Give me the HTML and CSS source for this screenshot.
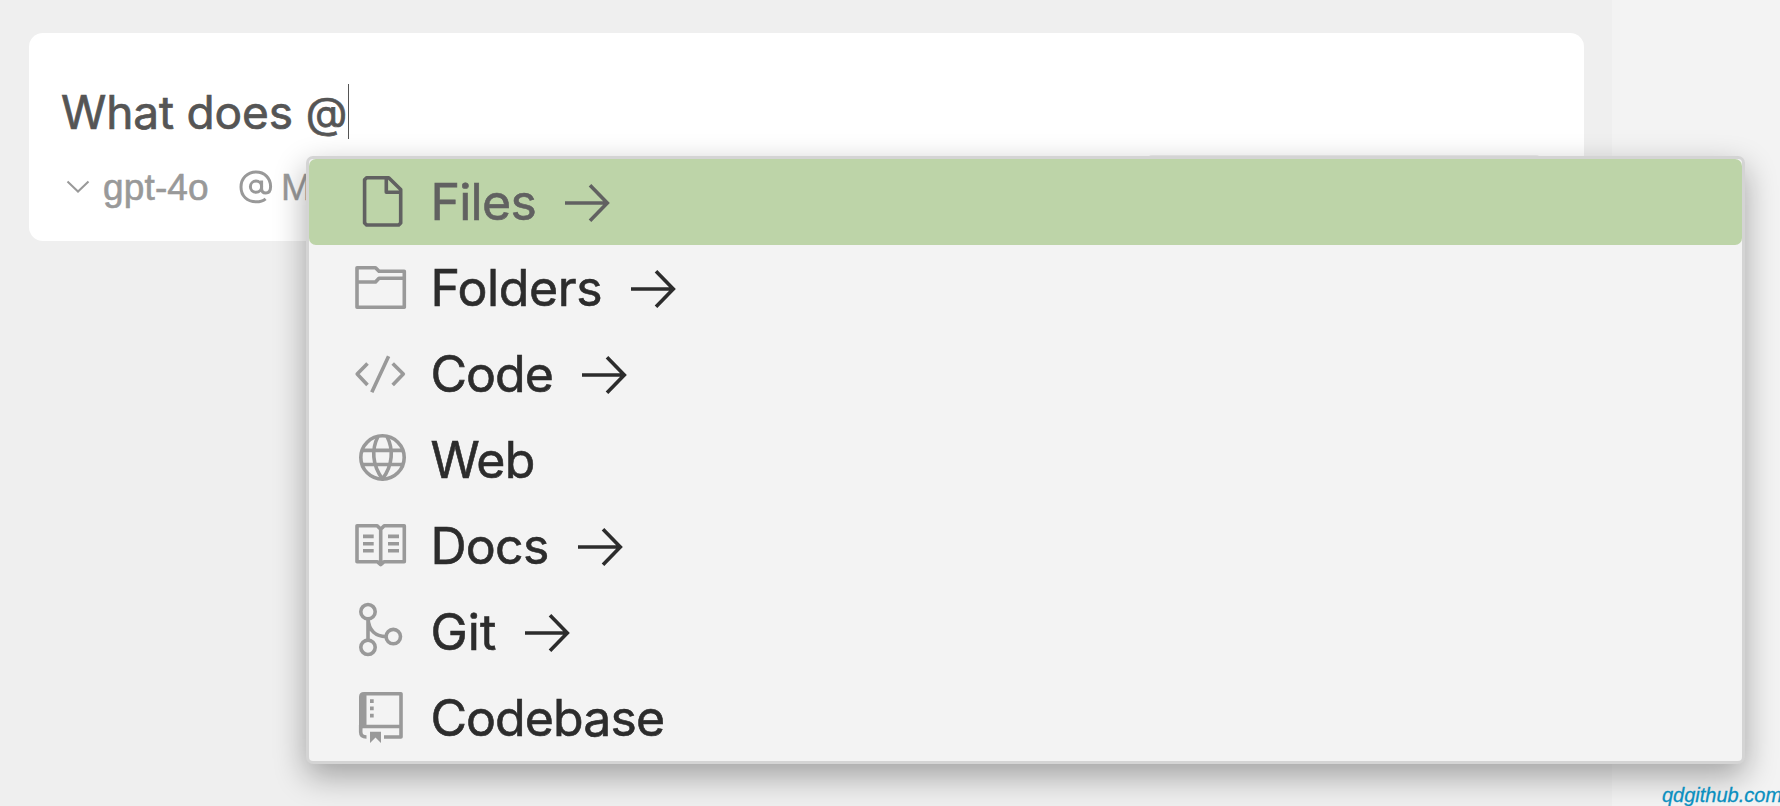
FILE: index.html
```html
<!DOCTYPE html>
<html lang="en">
<head>
<meta charset="utf-8">
<title>Chat context menu</title>
<link rel="stylesheet" href="styles.css">
</head>
<body>
<div class="app">
  <main class="chat">
    <section class="composer">
      <div class="prompt"><span class="prompt-text">What does <span class="prompt-at">@</span></span><span class="caret"></span></div>
      <div class="toolbar">
        <svg class="chevron" viewBox="0 0 24 14"><path d="M1.5 1.5 12 11.5 22.5 1.5"/></svg>
        <span class="model">gpt-4o</span>
        <svg class="at" viewBox="0 0 34 34"><circle cx="17" cy="16.7" r="5.6"/><path d="M22.6 10.5V18.5C22.6 21.5 24.2 23 26.7 23C29.800 23 31.600 20.500 31.600 16.500C31.600 8 25.500 2 17 2C8.400 2 2 8.300 2 17C2 26 8.200 31.800 17 31.800C20.700 31.800 24 31 26.600 28.800"/></svg>
        <span class="mention">M</span>
      </div>
      <div class="submit-edge"></div>
    </section>
  </main>
  <aside class="editor"></aside>
</div>

<ul class="menu">
  <li class="item selected">
    <svg class="icon" viewBox="0 0 60 86"><path d="M16.600 18.700H38.700L50.700 30.500V64L48.700 66H16.600L14.600 64V20.700Z M36.300 18.700V33.200H50.700"/></svg>
    <span class="label files">Files</span>
    <svg class="arrow" viewBox="0 0 46 86"><path d="M0 44H42M25 26.300 42.300 44 25 61.700"/></svg>
  </li>
  <li class="item">
    <svg class="icon" viewBox="0 0 60 86"><path d="M7 22.700H25.500L29 26.300H54.300V62.300H7Z M7 37H25.500L29 33.200H54.300"/></svg>
    <span class="label folders">Folders</span>
    <svg class="arrow" viewBox="0 0 46 86"><path d="M0 44H42M25 26.300 42.300 44 25 61.700"/></svg>
  </li>
  <li class="item">
    <svg class="icon" viewBox="0 0 60 86"><path d="M17.500 32.500 7.200 43 17.500 54M38.600 25.300 21.800 61.300M42.700 32.500 53.300 43 42.700 54"/></svg>
    <span class="label code">Code</span>
    <svg class="arrow" viewBox="0 0 46 86"><path d="M0 44H42M25 26.300 42.300 44 25 61.700"/></svg>
  </li>
  <li class="item">
    <svg class="icon" viewBox="0 0 60 86"><circle cx="32.500" cy="40.500" r="21.700"/><path d="M12.500 33.400H52.500M12.500 47.500H52.500M28 19.500C21.500 32 22 48 32.500 62C43 48 43.500 32 37 19.500"/></svg>
    <span class="label web">Web</span>
  </li>
  <li class="item">
    <svg class="icon" viewBox="0 0 60 86"><path d="M7 22.700H27.200L30.700 26.200 34.200 22.700H54.300V58.700H34.200L30.700 61.600 27.200 58.700H7ZM30.700 25V61M13 33.400H23.700M13 40.700H23.700M13 47.800H23.700M38 33.400H49M38 40.700H49M38 47.800H49"/></svg>
    <span class="label docs">Docs</span>
    <svg class="arrow" viewBox="0 0 46 86"><path d="M0 44H42M25 26.300 42.300 44 25 61.700"/></svg>
  </li>
  <li class="item">
    <svg class="icon" viewBox="0 0 60 86"><circle cx="18" cy="22.700" r="7.200"/><circle cx="18" cy="58.300" r="7.200"/><circle cx="43.300" cy="47.600" r="7.200"/><path d="M18 30V51M18 30C19 42 26 47.600 36 47.600"/></svg>
    <span class="label git">Git</span>
    <svg class="arrow" viewBox="0 0 46 86"><path d="M0 44H42M25 26.300 42.300 44 25 61.700"/></svg>
  </li>
  <li class="item">
    <svg class="icon" viewBox="0 0 60 86"><path d="M14 18.700H51V62H34M10.700 51.500H51M10.700 50V57Q10.700 62 16.500 62"/><path class="solid" d="M9 22Q9 17 14 17H16.500V51H14Q12 51.500 12 55H9ZM20 24.200h3.700v3.700H20zM20 31.500h3.700v3.700H20zM20 38.800h3.700v3.700H20zM20 56.700H31V68L25.500 62.500 20 68Z"/></svg>
    <span class="label codebase">Codebase</span>
  </li>
</ul>
<div class="watermark">qdgithub.com</div>
</body>
</html>
```
FILE: styles.css
```css
* { box-sizing: border-box; }

body {
  margin: 0;
  width: 1780px;
  height: 806px;
  overflow: hidden;
  position: relative;
  font-family: Inter, "Liberation Sans", sans-serif;
}

.app { display: flex; height: 806px; }
.chat { width: 1612px; padding: 33px 28px 0 29px; background: #efefef; }
.editor { flex: 1; background: #f3f3f3; }

.composer {
  position: relative;
  height: 208px;
  padding: 51px 33px 0 32px;
  border-radius: 14px;
  background: #fff;
}

.prompt {
  display: flex;
  height: 55px;
  color: #555;
  font-size: 46px;
  line-height: 57px;
  white-space: pre;
}
.prompt-text {
  width: 287px;
  letter-spacing: -0.15px;
  -webkit-text-stroke: 0.7px #555;
}
.prompt-at { font-size: 43px; line-height: 1; vertical-align: 1px; }
.caret { width: 1px; background: #555; }

.toolbar {
  display: flex;
  align-items: center;
  height: 50px;
  margin-top: 23px;
  color: #999;
  font-family: "Liberation Sans", Arial, sans-serif;
  font-size: 37px;
  line-height: 50px;
}
.chevron { width: 24px; height: 14px; margin-left: 5px; }
.model {
  width: 136px;
  margin-left: 13px;
  padding-top: 2px;
  letter-spacing: 0.15px;
  -webkit-text-stroke: 0.6px #999;
}
.at { width: 34px; height: 34px; }
.mention { margin-left: 8px; padding-top: 2px; -webkit-text-stroke: 0.4px #999; }
.chevron, .at { fill: none; stroke: #999; stroke-width: 2; }
.at { stroke-width: 3; }

.submit-edge {
  position: absolute;
  top: 122px;
  left: 1119px;
  width: 392px;
  height: 40px;
  border-radius: 4px;
  background: #eee;
}

.menu {
  position: absolute;
  top: 156px;
  left: 306px;
  width: 1439px;
  height: 608px;
  margin: 0;
  padding: 0;
  list-style: none;
  border: 3px solid #d4d4d4;
  border-radius: 7px;
  background: #f3f3f3;
  box-shadow: 0 12px 32px rgba(0, 0, 0, 0.33);
}

.item {
  display: flex;
  height: 86px;
  padding-left: 41px;
  border-radius: 7px;
  color: #2c2c2c;
  font-size: 50px;
  line-height: 86px;
}
.item.selected { background: #bdd4a8; color: #616161; }

.icon {
  width: 60px;
  height: 86px;
  margin-right: 20.4px;
  fill: none;
  stroke: #999;
  stroke-width: 3.6;
  stroke-linejoin: round;
}
.icon .solid { fill: #999; stroke: none; }
.selected .icon { stroke: #616161; }

.label { white-space: nowrap; -webkit-text-stroke: 0.6px currentColor; }
.files { width: 134.300px; letter-spacing: -0.7px; }
.folders { width: 200.300px; letter-spacing: -0.4px; }
.code { width: 151.300px; letter-spacing: -0.9px; }
.web { letter-spacing: -0.8px; }
.docs { width: 147.200px; letter-spacing: -0.7px; }
.git { width: 95px; letter-spacing: 0.1px; }
.codebase { letter-spacing: -0.9px; }

.arrow {
  width: 46px;
  height: 86px;
  fill: none;
  stroke: currentColor;
  stroke-width: 3.600;
}

.watermark {
  position: absolute;
  top: 783px;
  left: 1662px;
  color: #0a8fbf;
  font: italic 20px/24px "Liberation Sans", sans-serif;
  -webkit-text-stroke: 0.3px #0a8fbf;
  white-space: nowrap;
}
```
